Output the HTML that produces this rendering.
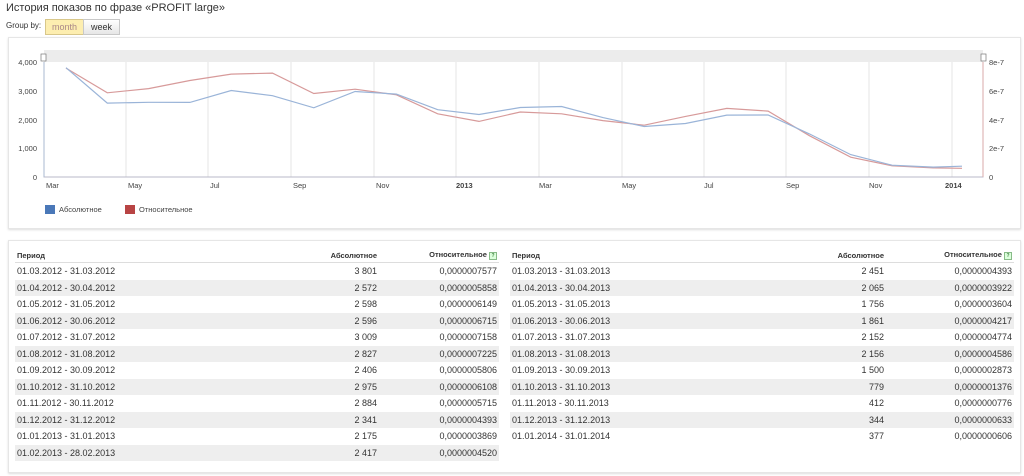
<!DOCTYPE html><html><head><meta charset="utf-8"><style>
body{margin:0;width:1024px;height:476px;background:#fff;font-family:"Liberation Sans",sans-serif;color:#333;position:relative;overflow:hidden}
.t{position:absolute;left:6px;top:2px;font-size:11px;color:#333}
.g{position:absolute;left:6px;top:21px;font-size:8px;color:#333}
.btn{position:absolute;top:19px;height:14px;font-size:9px;line-height:14px;text-align:center;border:1px solid #c8c8c8}
.panel{position:absolute;left:8px;border:1px solid #e6e6e6;box-shadow:0 1px 2px #ddd;background:#fff}
table{position:absolute;border-collapse:collapse;font-size:9px;color:#333}
td,th{height:16.5px;padding:0 2px;white-space:nowrap}
th{font-size:7.5px;font-weight:bold;text-align:left;height:14px;border-bottom:1px solid #ddd}
tbody tr:nth-child(even) td{background:#eee}
.r{text-align:right}
.q{display:inline-block;width:6px;height:6px;border:1px solid #8b8;background:#dfd;font-size:5px;line-height:6px;text-align:center;color:#484;vertical-align:middle}
</style></head><body>
<div class="t">История показов по фразе «PROFIT large»</div>
<div class="g">Group by:</div>
<div class="btn" style="left:45px;width:37px;background:#fdeeb0;color:#a88;border-color:#d8c78a">month</div>
<div class="btn" style="left:83px;width:35px;background:linear-gradient(#fff,#e6e6e6);color:#333">week</div>
<div class="panel" style="top:37px;width:1011px;height:190px"></div>
<svg style="position:absolute;left:0;top:0" width="1024" height="230" font-family="Liberation Sans" font-size="7.5" fill="#444">
<rect x="44" y="50" width="939" height="12" fill="#ececec"/>
<g stroke="#e6e6e6"><path d="M126 62V177M208 62V177M291 62V177M374 62V177M456 62V177M539 62V177M622 62V177M704 62V177M786 62V177M869 62V177M952 62V177"/></g>
<path d="M44 62V177H983V62" fill="none" stroke="#b8b8c8"/>
<path d="M983 62V177" stroke="#d8aaaa"/>
<path d="M44 62V177" stroke="#aab8d0"/>
<rect x="41" y="54" width="5" height="7" fill="#fff" stroke="#777" stroke-width=".7"/>
<rect x="981" y="54" width="5" height="7" fill="#fff" stroke="#777" stroke-width=".7"/>
<g text-anchor="end"><text x="37" y="65">4,000</text><text x="37" y="94">3,000</text><text x="37" y="123">2,000</text><text x="37" y="151">1,000</text><text x="37" y="180">0</text></g>
<g><text x="989" y="65">8e-7</text><text x="989" y="94">6e-7</text><text x="989" y="123">4e-7</text><text x="989" y="151">2e-7</text><text x="989" y="180">0</text></g>
<g><text x="46" y="188">Mar</text><text x="128" y="188">May</text><text x="210" y="188">Jul</text><text x="293" y="188">Sep</text><text x="376" y="188">Nov</text><text x="456" y="188" font-weight="bold">2013</text><text x="539" y="188">Mar</text><text x="622" y="188">May</text><text x="704" y="188">Jul</text><text x="786" y="188">Sep</text><text x="869" y="188">Nov</text><text x="945" y="188" font-weight="bold">2014</text></g>
<polyline fill="none" stroke="#d79a9a" stroke-width="1.2" points="66,68.1 107.3,92.8 148.6,88.6 189.9,80.5 231.2,74.1 272.5,73.1 313.8,93.5 355.1,89.2 396.4,94.8 437.7,113.8 479,121.4 520.3,112 561.6,113.8 602.9,120.6 644.2,125.2 685.5,116.4 726.8,108.4 768.1,111.1 809.4,135.7 850.7,157.2 892,165.8 933.3,167.9 962,168.3"/>
<polyline fill="none" stroke="#9ab4d8" stroke-width="1.2" points="66,67.7 107.3,103.1 148.6,102.3 189.9,102.4 231.2,90.5 272.5,95.7 313.8,107.8 355.1,91.5 396.4,94.1 437.7,109.7 479,114.5 520.3,107.5 561.6,106.5 602.9,117.6 644.2,126.5 685.5,123.5 726.8,115.1 768.1,115 809.4,133.9 850.7,154.6 892,165.2 933.3,167.1 962,166.2"/>
<rect x="45" y="205" width="10" height="9" fill="#4a78b8"/><text x="59" y="212">Абсолютное</text>
<rect x="125" y="205" width="10" height="9" fill="#b84444"/><text x="139" y="212">Относительное</text>
</svg>
<div class="panel" style="top:240px;width:1011px;height:231px"></div>
<table style="left:15px;top:248px;width:484px">
<thead><tr><th>Период</th><th class="r">Абсолютное</th><th class="r" style="width:116px">Относительное <span class="q">?</span></th></tr></thead>
<tbody>
<tr><td>01.03.2012 - 31.03.2012</td><td class="r">3 801</td><td class="r">0,0000007577</td></tr>
<tr><td>01.04.2012 - 30.04.2012</td><td class="r">2 572</td><td class="r">0,0000005858</td></tr>
<tr><td>01.05.2012 - 31.05.2012</td><td class="r">2 598</td><td class="r">0,0000006149</td></tr>
<tr><td>01.06.2012 - 30.06.2012</td><td class="r">2 596</td><td class="r">0,0000006715</td></tr>
<tr><td>01.07.2012 - 31.07.2012</td><td class="r">3 009</td><td class="r">0,0000007158</td></tr>
<tr><td>01.08.2012 - 31.08.2012</td><td class="r">2 827</td><td class="r">0,0000007225</td></tr>
<tr><td>01.09.2012 - 30.09.2012</td><td class="r">2 406</td><td class="r">0,0000005806</td></tr>
<tr><td>01.10.2012 - 31.10.2012</td><td class="r">2 975</td><td class="r">0,0000006108</td></tr>
<tr><td>01.11.2012 - 30.11.2012</td><td class="r">2 884</td><td class="r">0,0000005715</td></tr>
<tr><td>01.12.2012 - 31.12.2012</td><td class="r">2 341</td><td class="r">0,0000004393</td></tr>
<tr><td>01.01.2013 - 31.01.2013</td><td class="r">2 175</td><td class="r">0,0000003869</td></tr>
<tr><td>01.02.2013 - 28.02.2013</td><td class="r">2 417</td><td class="r">0,0000004520</td></tr>
</tbody></table>
<table style="left:510px;top:248px;width:504px">
<thead><tr><th>Период</th><th class="r">Абсолютное</th><th class="r" style="width:124px">Относительное <span class="q">?</span></th></tr></thead>
<tbody>
<tr><td>01.03.2013 - 31.03.2013</td><td class="r">2 451</td><td class="r">0,0000004393</td></tr>
<tr><td>01.04.2013 - 30.04.2013</td><td class="r">2 065</td><td class="r">0,0000003922</td></tr>
<tr><td>01.05.2013 - 31.05.2013</td><td class="r">1 756</td><td class="r">0,0000003604</td></tr>
<tr><td>01.06.2013 - 30.06.2013</td><td class="r">1 861</td><td class="r">0,0000004217</td></tr>
<tr><td>01.07.2013 - 31.07.2013</td><td class="r">2 152</td><td class="r">0,0000004774</td></tr>
<tr><td>01.08.2013 - 31.08.2013</td><td class="r">2 156</td><td class="r">0,0000004586</td></tr>
<tr><td>01.09.2013 - 30.09.2013</td><td class="r">1 500</td><td class="r">0,0000002873</td></tr>
<tr><td>01.10.2013 - 31.10.2013</td><td class="r">779</td><td class="r">0,0000001376</td></tr>
<tr><td>01.11.2013 - 30.11.2013</td><td class="r">412</td><td class="r">0,0000000776</td></tr>
<tr><td>01.12.2013 - 31.12.2013</td><td class="r">344</td><td class="r">0,0000000633</td></tr>
<tr><td>01.01.2014 - 31.01.2014</td><td class="r">377</td><td class="r">0,0000000606</td></tr>
</tbody></table>
</body></html>
